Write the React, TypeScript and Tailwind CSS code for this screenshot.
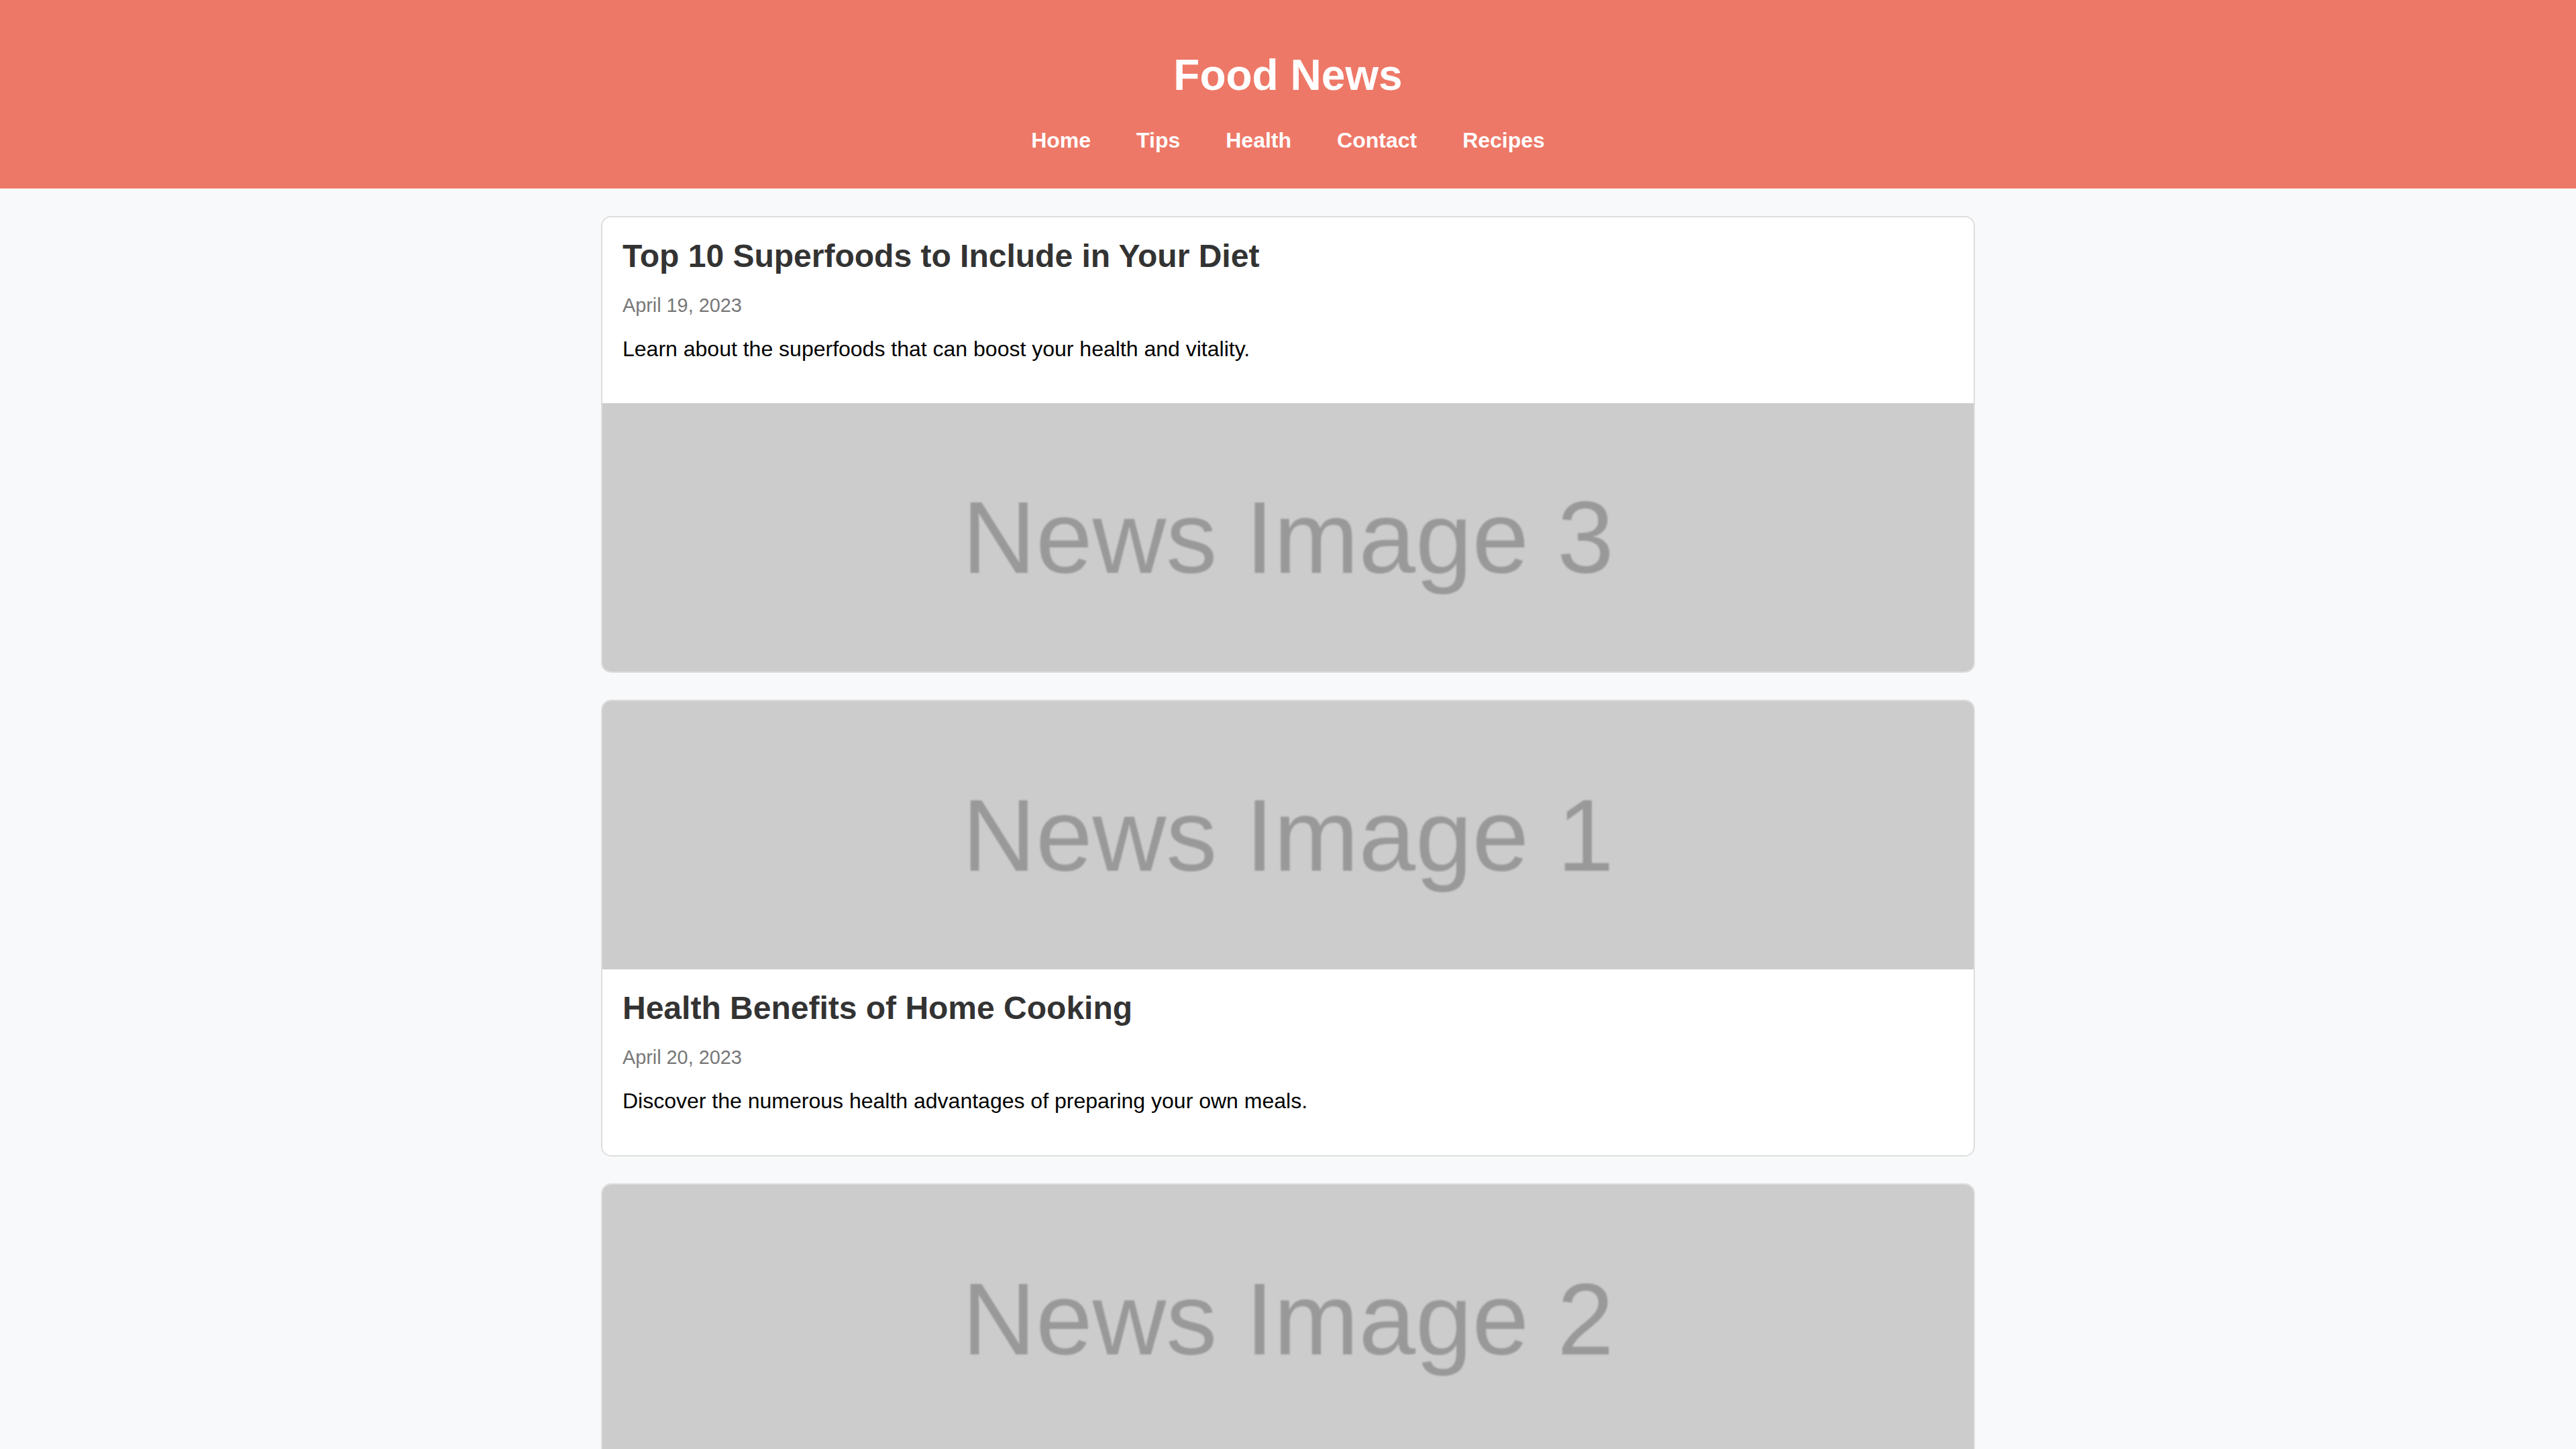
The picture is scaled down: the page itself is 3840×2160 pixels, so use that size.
import React from "react";

type Article = {
  title: string;
  date: string;
  desc: string;
  image: string;
  imageFirst: boolean;
};

const articles: Article[] = [
  {
    title: "Top 10 Superfoods to Include in Your Diet",
    date: "April 19, 2023",
    desc: "Learn about the superfoods that can boost your health and vitality.",
    image: "News Image 3",
    imageFirst: false,
  },
  {
    title: "Health Benefits of Home Cooking",
    date: "April 20, 2023",
    desc: "Discover the numerous health advantages of preparing your own meals.",
    image: "News Image 1",
    imageFirst: true,
  },
  {
    title: "Seasonal Produce Guide for Spring",
    date: "April 21, 2023",
    desc: "Find out which fruits and vegetables are at their best this season.",
    image: "News Image 2",
    imageFirst: true,
  },
];

function Placeholder({ label }: { label: string }) {
  return (
    <div className="h-[400px] w-full bg-[#cccccc] flex items-center justify-center overflow-hidden">
      <span className="text-[152px] leading-none text-[#999999] blur-[1.3px] whitespace-nowrap">
        {label}
      </span>
    </div>
  );
}

function Body({ a }: { a: Article }) {
  return (
    <div className="px-[30px] pt-[30px] pb-[62px] bg-white">
      <h2 className="text-[48px] leading-[55px] font-bold text-[#333333]">{a.title}</h2>
      <div className="mt-[30px] text-[28.8px] leading-[32px] text-[#777777]">{a.date}</div>
      <p className="mt-[30px] text-[32px] leading-[38px] text-black">{a.desc}</p>
    </div>
  );
}

export default function App() {
  return (
    <div
      className="min-h-screen bg-[#f8f9fa]"
      style={{ fontFamily: '"Liberation Sans", Arial, Helvetica, sans-serif' }}
    >
      <header className="bg-[#ee7867] pt-[75px] pb-[53px] flex flex-col items-center text-white">
        <h1 className="text-[64px] leading-[74px] font-bold">Food News</h1>
        <nav className="mt-[42px] flex gap-[68px] text-[32px] leading-[37px] font-bold">
          <a>Home</a>
          <a>Tips</a>
          <a>Health</a>
          <a>Contact</a>
          <a>Recipes</a>
        </nav>
      </header>
      <main className="w-[2048px] mx-auto pt-[41px] pb-[40px] flex flex-col gap-[40px]">
        {articles.map((a) => (
          <article
            key={a.title}
            className="border-2 border-[#dddddd] rounded-[15px] overflow-hidden bg-white"
          >
            {a.imageFirst ? (
              <>
                <Placeholder label={a.image} />
                <Body a={a} />
              </>
            ) : (
              <>
                <Body a={a} />
                <Placeholder label={a.image} />
              </>
            )}
          </article>
        ))}
      </main>
    </div>
  );
}
